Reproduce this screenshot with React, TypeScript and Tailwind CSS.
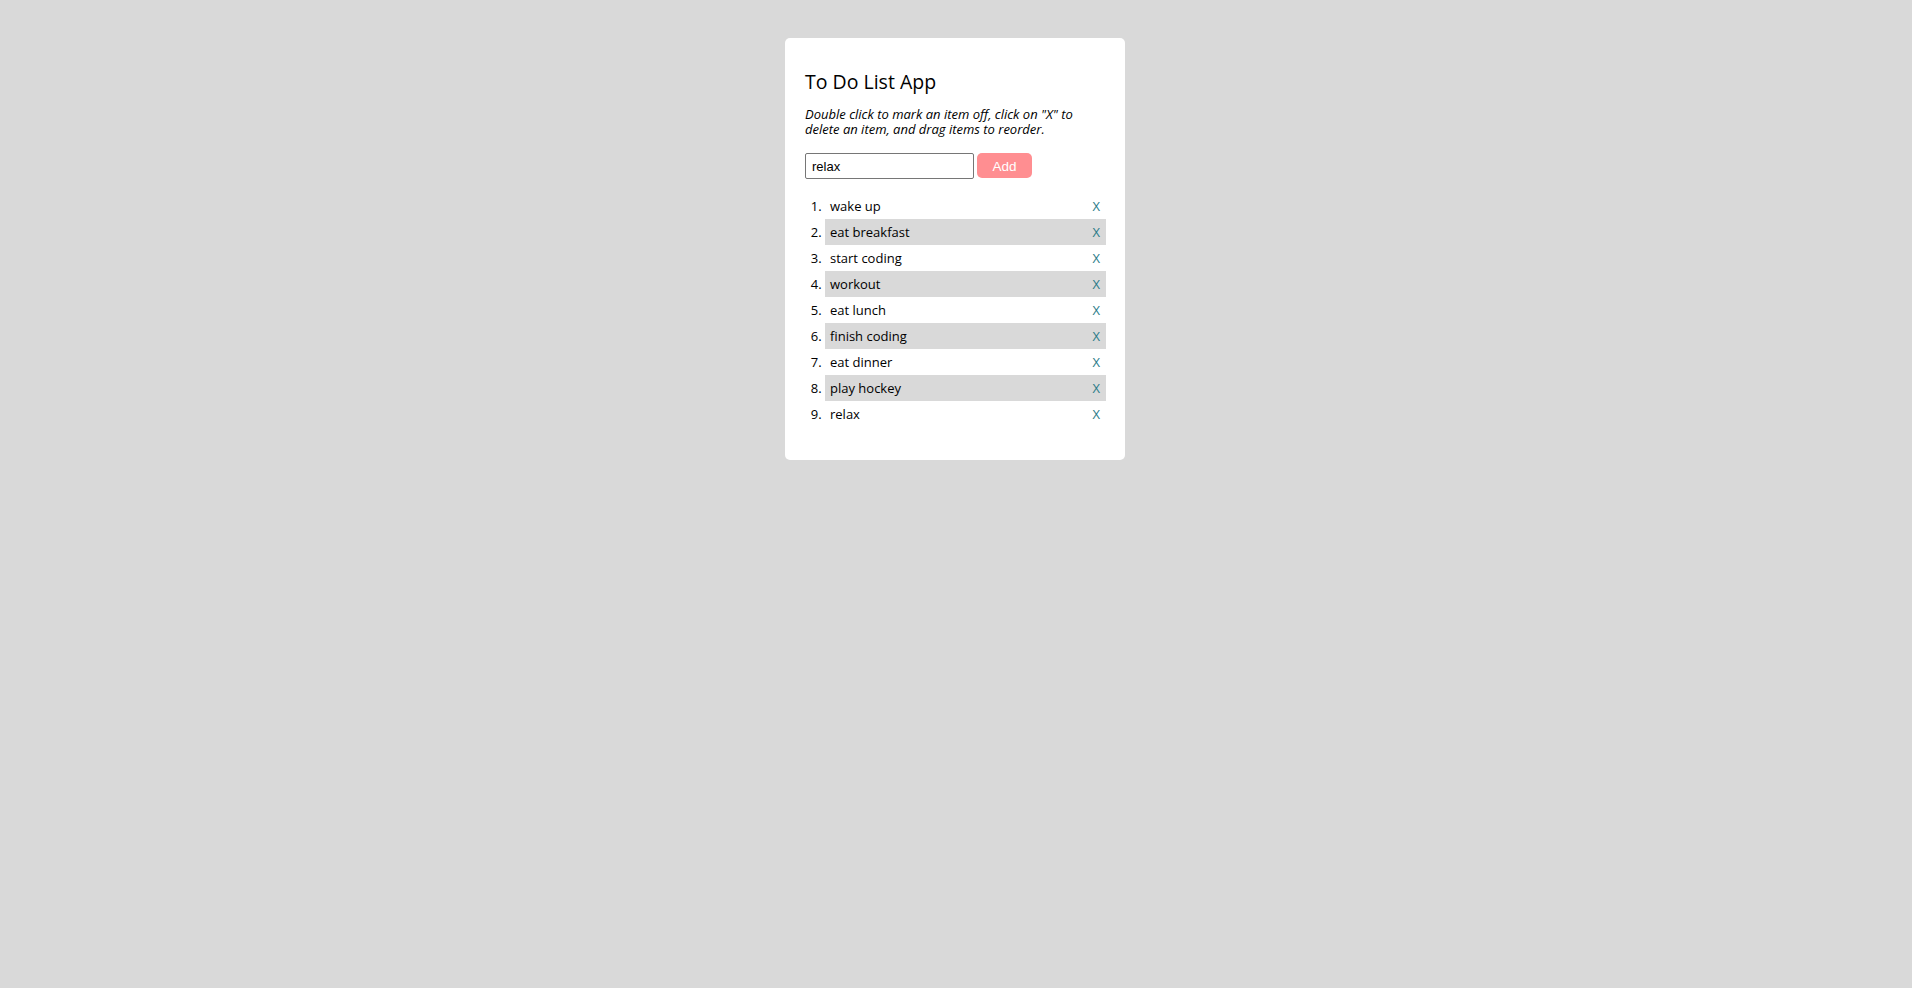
import React from "react";

const items = [
  "wake up",
  "eat breakfast",
  "start coding",
  "workout",
  "eat lunch",
  "finish coding",
  "eat dinner",
  "play hockey",
  "relax",
];

export default function App() {
  return (
    <div
      className="min-h-[988px] w-full bg-[#d9d9d9] pt-[38px]"
      style={{ fontFamily: '"Open Sans", "Noto Sans", sans-serif' }}
    >
      <div className="mx-auto w-[340px] -translate-x-px rounded-[5px] bg-white pl-5 pr-[19px] pt-[30px] pb-[33px] text-black">
        <h1 className="text-[19.5px] leading-[27px] font-normal">To Do List App</h1>
        <p className="mt-[12px] text-[13px] leading-[15px] italic">
          Double click to mark an item off, click on "X" to delete an item, and drag items to reorder.
        </p>
        <div className="mt-[16px] flex items-start gap-[3px]">
          <input
            readOnly
            value="relax"
            className="h-[26px] w-[169px] rounded-[2px] border border-[#767676] px-[6px] text-[13px] text-black outline-none"
            style={{ fontFamily: '"Liberation Sans", Arial, sans-serif' }}
          />
          <button
            className="flex h-[25px] w-[55px] items-center justify-center rounded-[5px] bg-[#ff8e91] pt-[2px] text-[13.5px] leading-none text-white"
            style={{ fontFamily: '"Liberation Sans", Arial, sans-serif' }}
          >
            Add
          </button>
        </div>
        <ol className="mt-[14px] list-decimal pl-[20px] text-[13px]">
          {items.map((t, i) => (
            <li
              key={t}
              className={`h-[26px] leading-[26px] ${i % 2 === 1 ? "bg-[#d9d9d9]" : ""}`}
            >
              <div className="flex items-center justify-between pl-[5px] pr-[6px]">
                <span>{t}</span>
                <span className="text-[#2a7b88]">X</span>
              </div>
            </li>
          ))}
        </ol>
      </div>
    </div>
  );
}
